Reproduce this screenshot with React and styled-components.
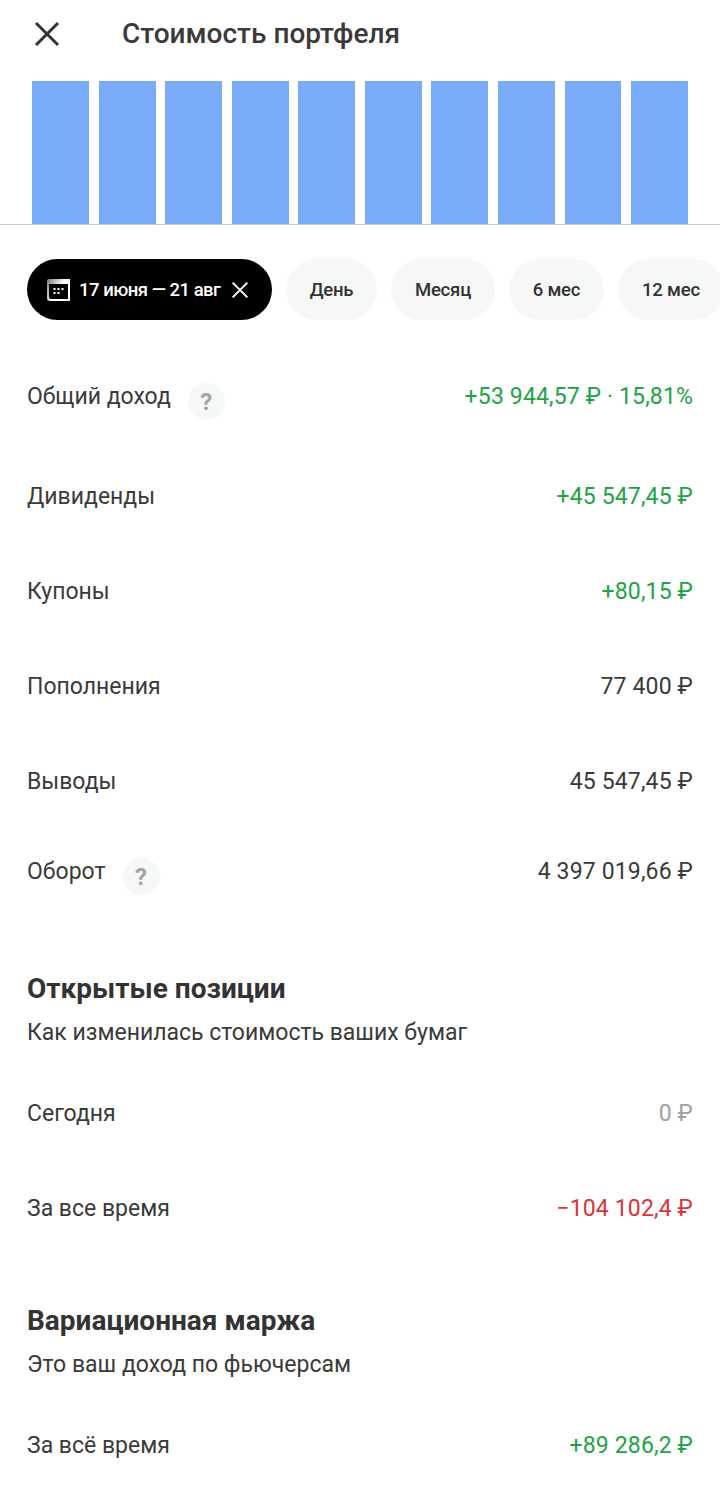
import React from 'react';
import styled, { createGlobalStyle } from 'styled-components';

const GlobalStyle = createGlobalStyle`
  html, body { margin: 0; padding: 0; background: #fff; }
  body { font-family: Roboto, "Noto Sans", sans-serif; color: #333; }
`;

const Page = styled.div`
  width: 720px;
  height: 1508px;
  overflow: hidden;
  background: #fff;
`;

const Header = styled.header`
  display: flex;
  align-items: center;
  height: 67px;
  padding-left: 32px;
  gap: 60px;
`;

const CloseBtn = styled.div`
  display: flex;
  width: 30px;
  height: 30px;
  color: #333;
`;

const Title = styled.h1`
  margin: 0;
  font-size: 28px;
  font-weight: 500;
  color: #3a3a3a;
`;

const Chart = styled.div`
  display: flex;
  gap: 9.6px;
  height: 143px;
  margin-top: 14px;
  padding: 0 32px;
  border-bottom: 1px solid #ccc;
`;

const Bar = styled.div`
  flex: 1;
  background: #7aabf9;
`;

const Chips = styled.div`
  display: flex;
  gap: 14px;
  margin-top: 34px;
  padding-left: 27px;
`;

const Chip = styled.div`
  flex: none;
  display: flex;
  align-items: center;
  justify-content: center;
  box-sizing: border-box;
  height: 61px;
  width: ${(p) => p.$w}px;
  border-radius: 30.5px;
  background: #f6f7f7;
  color: #333;
  font-size: 18.5px;
  font-weight: 500;
  letter-spacing: -0.2px;
`;

const ActiveChip = styled(Chip)`
  justify-content: flex-start;
  padding-left: 19px;
  background: #000;
  color: #fff;
`;

const ChipText = styled.span`
  margin-left: 9px;
  margin-right: 10px;
  white-space: nowrap;
  letter-spacing: -0.5px;
`;

const Rows = styled.section`
  margin-top: ${(p) => p.$top}px;
  padding: 0 27px;
`;

const Row = styled.div`
  display: flex;
  align-items: center;
  justify-content: space-between;
  height: ${(p) => (p.$hint ? 85 : 95)}px;
  margin-bottom: ${(p) => p.$gap || 0}px;
  font-size: 23px;
`;

const Label = styled.div`
  display: flex;
  align-items: center;
  color: #3a3a3a;
`;

const Hint = styled.span`
  display: flex;
  align-items: center;
  justify-content: center;
  width: 37px;
  height: 37px;
  margin-left: 17px;
  margin-top: 10px;
  border-radius: 50%;
  background: #f6f7f7;
  color: #a3a5a8;
  font-size: 24px;
  font-weight: 700;
`;

const Value = styled.div`
  color: ${(p) => p.$color || '#3a3a3a'};
  letter-spacing: 0.15px;
  white-space: nowrap;
`;

const Heading = styled.h2`
  margin: ${(p) => p.$top}px 0 0;
  padding: 0 27px;
  font-size: 28px;
  line-height: 36px;
  font-weight: 700;
  color: #333;
`;

const Sub = styled.p`
  margin: 9px 0 0;
  padding: 0 27px;
  font-size: 23px;
  line-height: 34px;
  color: #3a3a3a;
`;

const GREEN = '#21a345';
const RED = '#d8343a';
const GREY = '#a0a0a0';

const CrossIcon = ({ size, width }) => (
  <svg width={size} height={size} viewBox="0 0 30 30" fill="none" stroke="currentColor" strokeWidth={width}>
    <path d="M4 4 L26 26 M26 4 L4 26" />
  </svg>
);

const CalendarIcon = () => (
  <svg width="24" height="24" viewBox="0 0 24 24" fill="none">
    <defs>
      <linearGradient id="calFade" x1="0" y1="0" x2="1" y2="0.6">
        <stop offset="0" stopColor="#777" />
        <stop offset="0.6" stopColor="#fff" />
      </linearGradient>
    </defs>
    <path d="M3 1h21v22H4a3 3 0 0 1-3-3V3a2 2 0 0 1 2-2z" fill="url(#calFade)" />
    <path d="M3 6h19v15H5a2 2 0 0 1-2-2z" fill="#000" />
    <g fill="#fff">
      <rect x="7.5" y="10" width="2" height="2" />
      <rect x="11.5" y="10" width="2" height="2" />
      <rect x="15.5" y="10" width="2" height="2" />
      <rect x="7.5" y="14" width="2" height="2" />
      <rect x="11.5" y="14" width="2" height="2" />
    </g>
  </svg>
);

const bars = Array.from({ length: 10 }, (_, i) => i);

export default function App() {
  return (
    <Page>
      <GlobalStyle />
      <Header>
        <CloseBtn><CrossIcon size={30} width={3} /></CloseBtn>
        <Title>Стоимость портфеля</Title>
      </Header>

      <Chart>
        {bars.map((b) => <Bar key={b} />)}
      </Chart>

      <Chips>
        <ActiveChip $w={245}>
          <CalendarIcon />
          <ChipText>17 июня — 21 авг</ChipText>
          <CrossIcon size={20} width={3} />
        </ActiveChip>
        <Chip $w={91}>День</Chip>
        <Chip $w={104}>Месяц</Chip>
        <Chip $w={95}>6 мес</Chip>
        <Chip $w={106}>12 мес</Chip>
      </Chips>

      <Rows $top={34}>
        <Row $hint $gap={10}>
          <Label>Общий доход<Hint>?</Hint></Label>
          <Value $color={GREEN}>+53 944,57 ₽ · 15,81%</Value>
        </Row>
        <Row>
          <Label>Дивиденды</Label>
          <Value $color={GREEN}>+45 547,45 ₽</Value>
        </Row>
        <Row>
          <Label>Купоны</Label>
          <Value $color={GREEN}>+80,15 ₽</Value>
        </Row>
        <Row>
          <Label>Пополнения</Label>
          <Value>77 400 ₽</Value>
        </Row>
        <Row>
          <Label>Выводы</Label>
          <Value>45 547,45 ₽</Value>
        </Row>
        <Row $hint>
          <Label>Оборот<Hint>?</Hint></Label>
          <Value>4 397 019,66 ₽</Value>
        </Row>
      </Rows>

      <Heading $top={57}>Открытые позиции</Heading>
      <Sub>Как изменилась стоимость ваших бумаг</Sub>
      <Rows $top={16}>
        <Row>
          <Label>Сегодня</Label>
          <Value $color={GREY}>0 ₽</Value>
        </Row>
        <Row>
          <Label>За все время</Label>
          <Value $color={RED}>−104 102,4 ₽</Value>
        </Row>
      </Rows>

      <Heading $top={46.5}>Вариационная маржа</Heading>
      <Sub>Это ваш доход по фьючерсам</Sub>
      <Rows $top={16}>
        <Row>
          <Label>За всё время</Label>
          <Value $color={GREEN}>+89 286,2 ₽</Value>
        </Row>
      </Rows>
    </Page>
  );
}
